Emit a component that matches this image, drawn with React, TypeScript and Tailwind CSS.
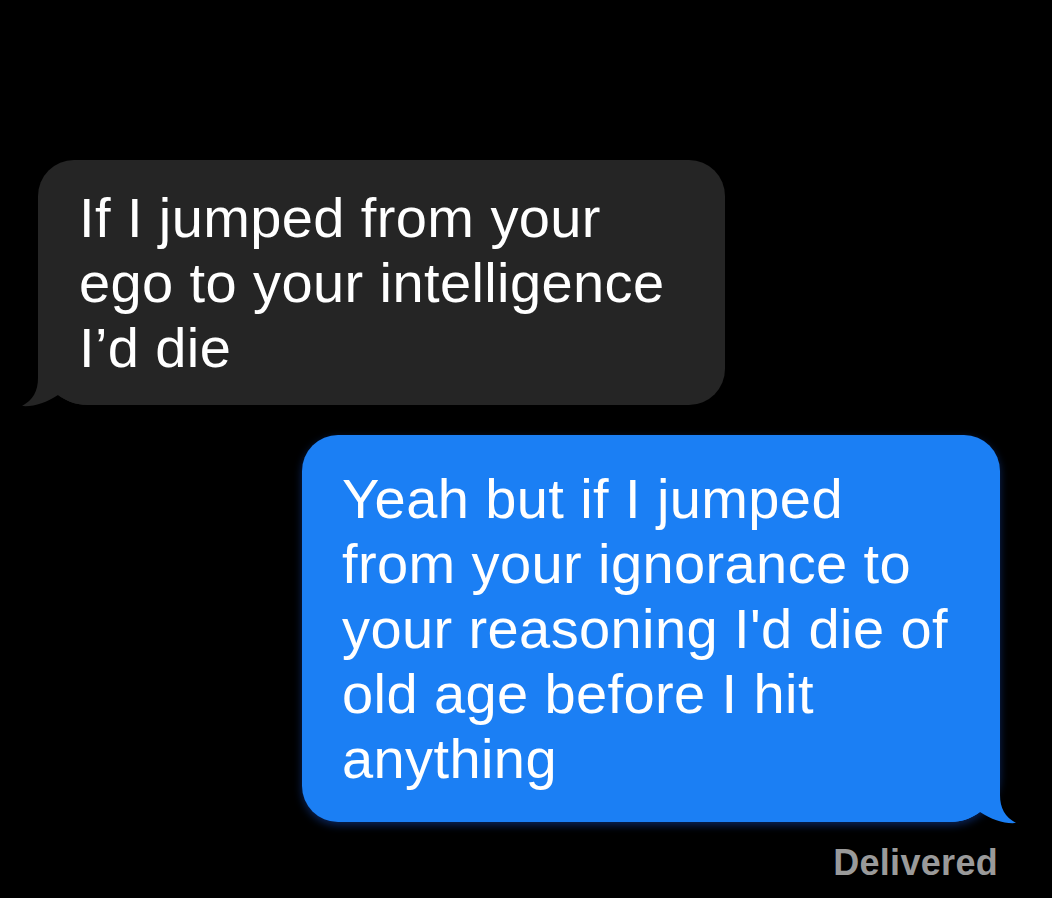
const font = "font-['Liberation_Sans',Arial,sans-serif]"

const grayLines = ["If I jumped from your", "ego to your intelligence", "I’d die"]
const blueLines = [
  "Yeah but if I jumped",
  "from your ignorance to",
  "your reasoning I'd die of",
  "old age before I hit",
  "anything",
]

function Tail({ color, flip }: { color: string; flip?: boolean }) {
  return (
    <svg
      width="66"
      height="54"
      viewBox="0 0 66 54"
      className={`absolute bottom-[-2px] ${flip ? "left-[-16px] -scale-x-100" : "right-[-16px]"}`}
    >
      <path
        d="M50 0 L50 25 C50 38 55 47 66 53 C55 54 42 50 30 42 C22 48 12 52 0 52 L0 0 Z"
        fill={color}
      />
    </svg>
  )
}

export default function App() {
  return (
    <div className={`min-h-screen w-full bg-black ${font} text-white`}>
      <div className="flex flex-col pt-[160px]">
        {/* received */}
        <div className="relative ml-[38px] w-[687px] rounded-[36px] rounded-bl-[50px] bg-[#252525] pl-[41px] pt-[25px] pb-[25px]">
          <Tail color="#252525" flip />
          {grayLines.map((line, i) => (
            <div key={i} className="relative whitespace-nowrap text-[56px] leading-[65px] tracking-[0.4px]">
              {line}
            </div>
          ))}
        </div>

        {/* sent */}
        <div className="relative mt-[30px] ml-[302px] w-[698px] rounded-[36px] rounded-br-[50px] bg-[#1b7ff4] pl-[40px] pt-[31px] pb-[31px] shadow-[0_3px_8px_rgba(20,70,170,0.55)]">
          <Tail color="#1b7ff4" />
          {blueLines.map((line, i) => (
            <div key={i} className="relative whitespace-nowrap text-[56px] leading-[65px] tracking-[0.4px]">
              {line}
            </div>
          ))}
        </div>

        <div className="mt-[20px] flex justify-end pr-[54px]">
          <span className="text-[36px] font-bold leading-[41px] tracking-[0.3px] text-[#9a9a9a]">Delivered</span>
        </div>
      </div>
    </div>
  )
}
